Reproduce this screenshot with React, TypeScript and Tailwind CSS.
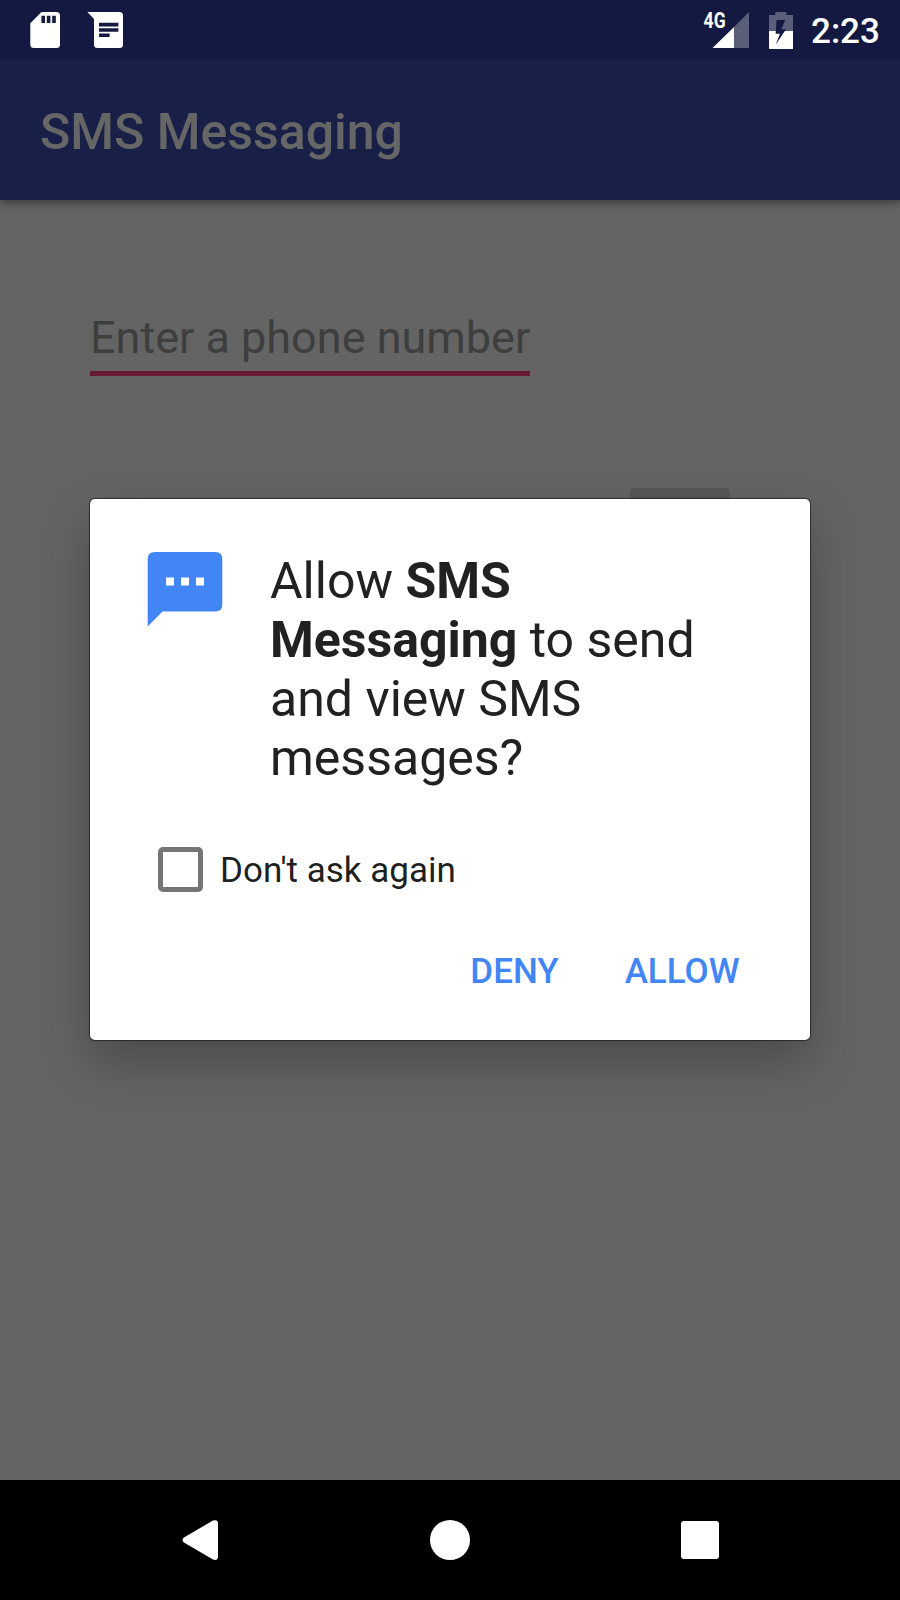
import type { ReactNode } from "react";

function StatusBar() {
  return (
    <header className="relative z-10 flex h-[60px] items-start justify-between bg-[#131940] text-white">
      <svg className="h-[60px] w-[140px]" viewBox="0 0 140 60" fill="currentColor" aria-label="Notifications">
        <path
          fillRule="evenodd"
          d="M41.5 12H56.5Q60 12 60 15.5V44.5Q60 48 56.5 48H34Q30.3 48 30.3 44.5V23.2ZM41.4 15.8V23H45V15.8ZM46.8 15.8V23H50.4V15.8ZM52.2 15.8V23H55.8V15.8Z"
        />
        <path
          fillRule="evenodd"
          d="M87.3 12H119.5Q123 12 123 15.5V44.5Q123 48 119.5 48H97.5Q94 48 94 44.5V19ZM99 22.8V26.5H118.4V22.8ZM99 28.2V31.8H118.4V28.2ZM99 33.5V37H109.6V33.5Z"
        />
      </svg>
      <div className="flex">
        <svg className="h-[60px] w-[111px]" viewBox="700 0 111 60" fill="currentColor" aria-label="Signal and battery">
          <text
            x="703.6"
            y="28"
            fontFamily="Roboto, sans-serif"
            fontSize="22"
            fontWeight="700"
            textLength="22"
            lengthAdjust="spacingAndGlyphs"
          >
            4G
          </text>
          <path opacity=".3" d="M749 12V48H734V27Z" />
          <path d="M734 27V48H712.5Z" />
          <path opacity=".3" d="M775.3 12H786.3V15H793V31H785L786 29.3H781.3L785.3 20H776.7L775.7 31H769V15H775.3Z" />
          <path d="M769 31H775.8L775.7 33.7H780L775.7 44.7L784.8 31H793V49H769Z" />
        </svg>
        <time className="w-[89px] pt-[11px] text-[35px] leading-[41px] font-medium">2:23</time>
      </div>
    </header>
  );
}

function DialogButton({ children }: { children: ReactNode }) {
  return <button className="text-[35px] leading-[41px] font-medium text-[#4285f4]">{children}</button>;
}

function PermissionDialog() {
  return (
    <section
      role="dialog"
      className="absolute top-[499px] left-[90px] z-20 flex h-[541px] w-[720px] flex-col rounded-[5px] bg-white text-[#212121] shadow-[0_0_1px_1px_rgba(0,0,0,0.5),0_22px_50px_rgba(0,0,0,0.26)]"
    >
      <div className="flex pt-[53px] pl-[57px]">
        <svg className="h-[76px] w-[76px] shrink-0" viewBox="0 0 76 76" aria-hidden="true">
          <path fill="#4285f4" d="M8 0H68.3Q75.3 0 75.3 7V52.5Q75.3 59.5 68.3 59.5H15.5L.7 74.5V7Q.7 0 8 0Z" />
          <path fill="#fff" d="M19 25.5H27V33.5H19ZM34 25.5H42V33.5H34ZM49 25.5H57V33.5H49Z" />
        </svg>
        <p className="ml-[47px] text-[50px] leading-[59px] whitespace-nowrap">
          Allow <b>SMS</b>
          <br />
          <b>Messaging</b> to send
          <br />
          and view SMS
          <br />
          messages?
        </p>
      </div>
      <label className="mt-[59px] ml-[67.5px] flex items-start">
        <span className="size-[45px] rounded-[5px] border-[5px] border-[#757575]" />
        <span className="mt-[3px] ml-[17.5px] text-[35px] leading-[41px] text-black/90">Don&apos;t ask again</span>
      </label>
      <div className="mt-[59px] flex justify-end gap-[66px] pr-[70.5px]">
        <DialogButton>DENY</DialogButton>
        <DialogButton>ALLOW</DialogButton>
      </div>
    </section>
  );
}

function NavigationBar() {
  return (
    <nav className="flex h-[120px] items-center bg-black pl-[182px]">
      <svg className="h-[40px] w-[36px]" viewBox="0 0 36 40" fill="#fff" aria-label="Back">
        <path d="M1.5 17.8L31 .5Q36 -1 36 3.5V36.5Q36 41 31 39.5L1.5 22.2Q-.5 20 1.5 17.8Z" />
      </svg>
      <span className="ml-[212px] size-[40px] rounded-full bg-white" />
      <span className="ml-[211px] size-[38px] rounded-[3px] bg-white" />
    </nav>
  );
}

export default function App() {
  return (
    <div className="relative flex h-[1600px] w-[900px] flex-col overflow-hidden bg-[#646464] font-['Roboto',sans-serif]">
      <StatusBar />
      <div className="flex h-[140px] items-center bg-[#192048] pt-[4px] pl-[40px] shadow-[0_3px_8px_rgba(0,0,0,0.4)]">
        <h1 className="text-[50px] leading-[59px] font-medium text-[#666666]">SMS Messaging</h1>
      </div>
      <main className="flex flex-1 flex-col">
        <div className="mt-[111px] ml-[90px] h-[65px] w-[440px] border-b-[5px] border-[#661a34] text-[45px] leading-[53px] whitespace-nowrap text-[#3e3e3e]">
          Enter a phone number
        </div>
        <div className="mt-[112px] ml-[630px] h-[90px] w-[100px] rounded-[5px] bg-[#565656]" />
      </main>
      <NavigationBar />
      <PermissionDialog />
    </div>
  );
}
